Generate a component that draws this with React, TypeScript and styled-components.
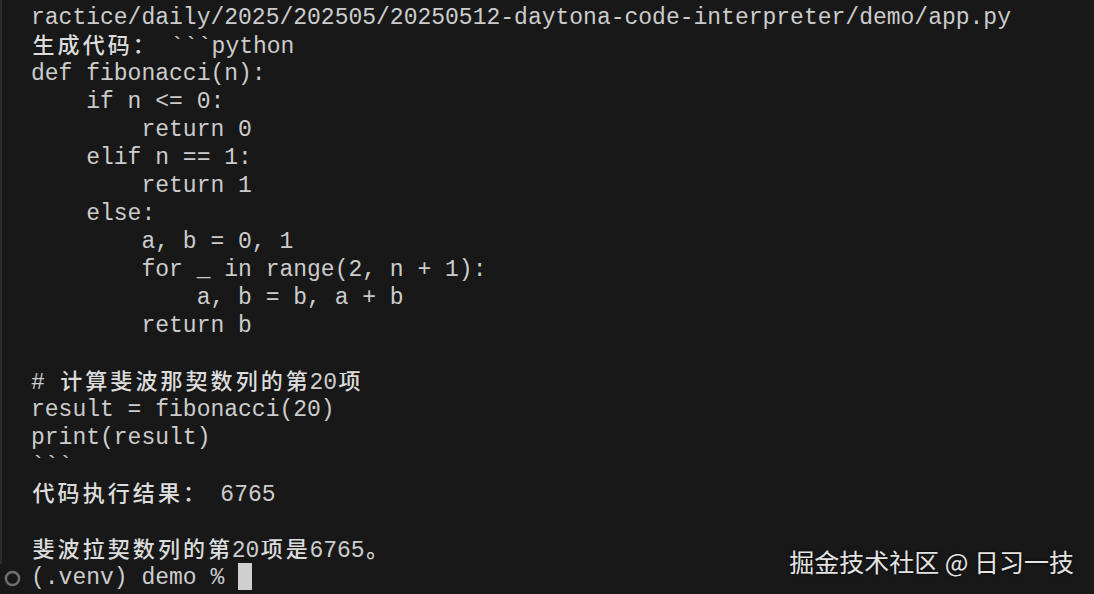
import React from "react";
import styled, { createGlobalStyle } from "styled-components";

const Global = createGlobalStyle`
  html, body {
    margin: 0;
    padding: 0;
    background: #181818;
  }
  #root {
    width: 1094px;
    height: 594px;
    overflow: hidden;
  }
`;

const Terminal = styled.div`
  position: relative;
  width: 1094px;
  height: 594px;
  box-sizing: border-box;
  padding-top: 4px;
  background: #181818;
  color: #cccccc;
  font-family: "Liberation Mono", "Noto Sans CJK SC", monospace;
  font-size: 23px;
  overflow: hidden;
`;

const OutputBlock = styled.div`
  border-left: 2px solid #2d2d2d;
  padding-left: 29px;
  margin-top: -4px;
  padding-top: 4px;
`;

const Line = styled.div`
  height: 28px;
  line-height: 28px;
  white-space: pre;
`;

const Cjk = styled.span`
  display: inline-block;
  width: 2ch;
  text-align: center;
  font-family: "Noto Sans CJK SC", sans-serif;
  font-size: 22px;
  font-weight: 500;
  color: #dcdcdc;
  vertical-align: baseline;
  line-height: 1;
`;

const PromptRow = styled.div`
  display: grid;
  grid-template-columns: 31px 1fr;
  height: 28px;
  line-height: 28px;
  white-space: pre;
`;

const Gutter = styled.div`
  display: flex;
  align-items: center;
  justify-content: flex-start;
  padding-left: 4px;
`;

const Cursor = styled.span`
  display: inline-block;
  width: 1ch;
  height: 27px;
  background: #cfcfcf;
  vertical-align: top;
  margin-top: -1px;
`;

const Watermark = styled.div`
  position: absolute;
  right: 20px;
  top: 547px;
  line-height: 28px;
  font-family: "Noto Sans CJK SC", "Noto Sans", sans-serif;
  font-size: 25px;
  color: #e4e4e4;
  text-shadow: 0 0 3px rgba(0, 0, 0, 0.8);
  white-space: pre;
`;

const CJK_RE = /[\u3000-\u303f\u4e00-\u9fff\uff00-\uffef]/;

function TermText({ text }: { text: string }) {
  const parts: React.ReactNode[] = [];
  let buf = "";
  let key = 0;
  for (const ch of Array.from(text)) {
    if (CJK_RE.test(ch)) {
      if (buf) {
        parts.push(<span key={key++}>{buf}</span>);
        buf = "";
      }
      parts.push(<Cjk key={key++}>{ch}</Cjk>);
    } else {
      buf += ch;
    }
  }
  if (buf) parts.push(<span key={key++}>{buf}</span>);
  return <>{parts}</>;
}

const lines = [
  "ractice/daily/2025/202505/20250512-daytona-code-interpreter/demo/app.py",
  "生成代码： ```python",
  "def fibonacci(n):",
  "    if n <= 0:",
  "        return 0",
  "    elif n == 1:",
  "        return 1",
  "    else:",
  "        a, b = 0, 1",
  "        for _ in range(2, n + 1):",
  "            a, b = b, a + b",
  "        return b",
  "",
  "# 计算斐波那契数列的第20项",
  "result = fibonacci(20)",
  "print(result)",
  "```",
  "代码执行结果： 6765",
  "",
  "斐波拉契数列的第20项是6765。",
];

export default function App() {
  return (
    <>
      <Global />
      <Terminal>
        <OutputBlock>
          {lines.map((l, i) => (
            <Line key={i}>
              <TermText text={l} />
            </Line>
          ))}
        </OutputBlock>
        <PromptRow>
          <Gutter>
            <svg width="17" height="17" viewBox="0 0 16 16">
              <circle cx="8" cy="8" r="6.2" fill="none" stroke="#6f6f6f" strokeWidth="2.3" />
            </svg>
          </Gutter>
          <div>
            <span>(.venv) demo % </span>
            <Cursor />
          </div>
        </PromptRow>
        <Watermark>掘金技术社区 @ 日习一技</Watermark>
      </Terminal>
    </>
  );
}
